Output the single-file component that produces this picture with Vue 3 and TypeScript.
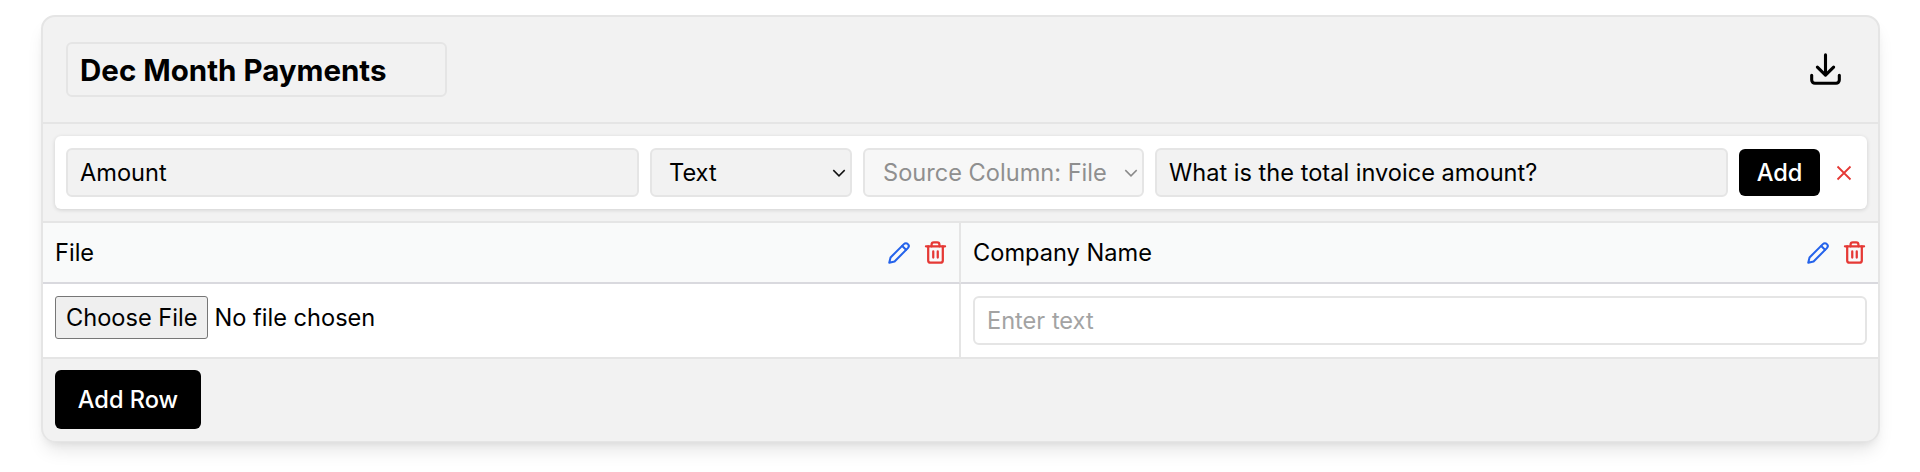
<template>
  <div class="page">
    <div class="card">
      <div class="card-head">
        <input class="title-input" type="text" :value="title" />
        <button class="icon-btn download" type="button" aria-label="Download">
          <svg width="39" height="39" viewBox="0 0 24 24" fill="none" stroke="currentColor" stroke-width="1.900" stroke-linecap="round" stroke-linejoin="round">
            <path d="M12 3v12" />
            <path d="M7 10.500l5 5 5-5" />
            <path d="M3.500 15.500v3a2 2 0 0 0 2 2h13a2 2 0 0 0 2-2v-3" />
          </svg>
        </button>
      </div>

      <div class="form-wrap">
        <form class="col-form" @submit.prevent>
          <input class="field name" type="text" value="Amount" />
          <div class="select-wrap type">
            <select class="field select">
              <option>Text</option>
              <option>Number</option>
            </select>
            <svg class="chevron" width="16" height="16" viewBox="0 0 14 14" fill="none" stroke="#111" stroke-width="1.300"><path d="M2 4.500l5 5 5-5" /></svg>
          </div>
          <div class="select-wrap source">
            <select class="field select" disabled>
              <option>Source Column: File</option>
            </select>
            <svg class="chevron" width="16" height="16" viewBox="0 0 14 14" fill="none" stroke="#8a8a8a" stroke-width="1.300"><path d="M2 4.500l5 5 5-5" /></svg>
          </div>
          <input class="field prompt" type="text" value="What is the total invoice amount?" />
          <button class="btn add" type="submit">Add</button>
          <button class="icon-btn close" type="button" aria-label="Cancel">
            <svg width="20" height="20" viewBox="0 0 20 20" fill="none" stroke="currentColor" stroke-width="1.800"><path d="M3.500 3.500l13 13M16.500 3.500l-13 13" /></svg>
          </button>
        </form>
      </div>

      <div class="table">
        <div v-for="col in columns" :key="col" class="th">
          <span>{{ col }}</span>
          <span class="th-actions">
            <svg class="pencil" width="26" height="26" viewBox="0 0 24 24" fill="none" stroke="currentColor" stroke-width="1.900" stroke-linecap="round" stroke-linejoin="round">
              <path d="M3 21l1.200-4.900L16.500 3.800a2.400 2.400 0 0 1 3.700 3.700L7.900 19.800z" />
              <path d="M15 5.500l3.500 3.500" />
            </svg>
            <svg class="trash" width="27" height="27" viewBox="0 0 24 24" fill="none" stroke="currentColor" stroke-width="2" stroke-linecap="round" stroke-linejoin="round">
              <path d="M3.500 6.500h17" />
              <path d="M8.500 6.500V5a2 2 0 0 1 2-2h3a2 2 0 0 1 2 2v1.500" />
              <path d="M5.500 6.500V19a2 2 0 0 0 2 2h9a2 2 0 0 0 2-2V6.500" />
              <path d="M10 11v5.500M14 11v5.500" />
            </svg>
          </span>
        </div>
        <div class="td"><input class="file" type="file" /></div>
        <div class="td"><input class="text-cell" type="text" placeholder="Enter text" /></div>
      </div>

      <div class="card-foot">
        <button class="btn add-row" type="button">Add Row</button>
      </div>
    </div>
  </div>
</template>

<script setup lang="ts">
const title = 'Dec Month Payments';
const columns: string[] = ['File', 'Company Name'];
</script>

<style>
body {
  background: #fff;
}
</style>

<style scoped>
.page {
  padding: 15px 40px 31px 41px;
  font-family: Inter, 'Liberation Sans', sans-serif;
  color: #000;
}

.card {
  background: #f2f2f2;
  border: 2px solid #e5e5e5;
  border-bottom-width: 1px;
  border-radius: 14px;
  box-shadow: 0 12px 18px -4px rgba(0, 0, 0, 0.1), 0 5px 8px -4px rgba(0, 0, 0, 0.08);
  overflow: hidden;
}

.card-head {
  display: flex;
  align-items: center;
  justify-content: space-between;
  height: 105px;
  padding: 0 24px 0 23px;
  border-bottom: 2px solid #e5e5e5;
  box-sizing: content-box;
}

.title-input {
  width: 381px;
  height: 55px;
  box-sizing: border-box;
  padding: 0 12px;
  background: #f2f2f2;
  border: 2px solid #e5e5e5;
  border-radius: 6px;
  font: 700 29.500px Inter, sans-serif;
  color: #000;
  outline: none;
}

.icon-btn {
  display: flex;
  padding: 0;
  border: 0;
  background: none;
  cursor: pointer;
}

.download {
  color: #000;
  margin-right: 9px;
}

.form-wrap {
  padding: 12px 11px 12px 12px;
  border-bottom: 2px solid #e5e5e5;
}

.col-form {
  display: flex;
  align-items: center;
  gap: 11px;
  height: 73px;
  padding: 0 12px 0 11px;
  background: #fff;
  border-radius: 6px;
  box-shadow: 0 1px 4px rgba(0, 0, 0, 0.14);
}

.field {
  height: 49px;
  box-sizing: border-box;
  padding: 0 12px;
  background: #f2f2f2;
  border: 2px solid #e5e5e5;
  border-radius: 6px;
  font: 400 23.600px Inter, sans-serif;
  color: #000;
  outline: none;
}

.name {
  width: 573px;
}

.prompt {
  width: 573px;
}

.select-wrap {
  position: relative;
}

.type,
.type .select {
  width: 202px;
}

.source,
.source .select {
  width: 281px;
}

.select {
  display: block;
  appearance: none;
}

.type .select {
  padding-left: 17px;
}

.source .select {
  background: #f7f7f7;
  color: #8f8f8f;
  opacity: 1;
  padding-left: 18px;
}

.chevron {
  position: absolute;
  right: 5px;
  top: 17px;
  pointer-events: none;
}

.btn {
  border: 0;
  border-radius: 6px;
  background: #000;
  color: #fff;
  font: 500 23.600px Inter, sans-serif;
  cursor: pointer;
}

.add {
  flex: none;
  width: 81px;
  height: 47px;
}

.close {
  color: #e53935;
  margin-left: 3px;
}

.table {
  display: grid;
  grid-template-columns: 918px 1fr;
}

.th {
  display: flex;
  align-items: center;
  justify-content: space-between;
  height: 59px;
  padding: 0 10px 0 12px;
  background: #f9fafa;
  border-bottom: 2px solid #d9d9de;
  font-size: 23.600px;
  box-sizing: content-box;
}

.th:first-child {
  border-right: 2px solid #e5e5e5;
}

.th-actions {
  display: flex;
  align-items: center;
  gap: 10px;
}

.pencil {
  color: #2563eb;
}

.trash {
  color: #e53935;
}

.td {
  display: flex;
  align-items: flex-start;
  padding: 12px;
  box-sizing: content-box;
  height: 49px;
  background: #fff;
  border-bottom: 2px solid #e5e5e5;
}

.td:nth-child(3) {
  border-right: 2px solid #e5e5e5;
}

.td:nth-child(4) {
  padding-right: 11px;
}

.file {
  font: 400 23.600px Inter, sans-serif;
  color: #000;
}

.file::file-selector-button {
  height: 43px;
  padding: 0 10px;
  margin-right: 6px;
  background: #efefef;
  border: 1px solid #767676;
  border-radius: 3px;
  font: 400 23.600px Inter, sans-serif;
  color: #000;
}

.text-cell {
  width: 100%;
  height: 49px;
  box-sizing: border-box;
  padding: 0 12px;
  background: #fff;
  border: 2px solid #e5e5e5;
  border-radius: 6px;
  font: 400 23.600px Inter, sans-serif;
  outline: none;
}

.text-cell::placeholder {
  color: #a3a3a3;
}

.card-foot {
  display: flex;
  padding: 11px 12px 12px;
}

.add-row {
  width: 146px;
  height: 59px;
}
</style>
